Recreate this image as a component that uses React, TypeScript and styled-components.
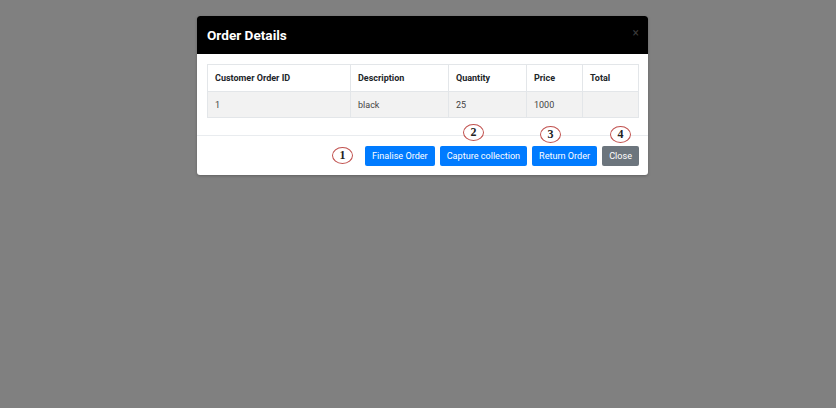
import React from "react";
import styled, { createGlobalStyle } from "styled-components";

const Global = createGlobalStyle`
  html, body { margin: 0; padding: 0; }
  body { background: #808080; font-family: Roboto, "Liberation Sans", Arial, sans-serif; width: 836px; height: 408px; overflow: hidden; }
`;

const Page = styled.div`
  width: 836px;
  height: 408px;
  display: flex;
  justify-content: flex-start;
  align-items: flex-start;
  padding: 16px 0 0 197px;
  box-sizing: border-box;
`;

const Modal = styled.div`
  position: relative;
  width: 451px;
  background: #fff;
  border-radius: 3px;
  box-shadow: 0 1px 3px rgba(0,0,0,0.25);
`;

const Header = styled.div`
  height: 38px;
  background: #000;
  border-radius: 3px 3px 0 0;
  display: flex;
  align-items: center;
  justify-content: space-between;
  padding: 0 9px 0 10px;
`;

const Title = styled.h5`
  margin: 0;
  color: #fff;
  font-size: 13.6px;
  font-weight: 700;
`;

const CloseX = styled.span`
  color: #3a3a3a;
  font-size: 12px;
  line-height: 1;
  margin-top: -4px;
`;

const Body = styled.div`
  padding: 10px 9px 17px 10px;
  border-bottom: 1px solid #e9ecef;
`;

const Table = styled.table`
  width: 100%;
  border-collapse: collapse;
  font-size: 9px;
  color: #212529;
  th, td {
    border: 1px solid #e3e6e9;
    text-align: left;
    padding: 0 7px;
  }
  th { font-weight: 700; height: 26px; }
  td { height: 25px; color: #444; }
  tbody tr { background: #f2f2f2; }
`;

const Footer = styled.div`
  display: flex;
  justify-content: flex-end;
  gap: 5px;
  padding: 10px 9px 9px 10px;
`;

const Button = styled.button<{ $variant?: "primary" | "secondary" }>`
  height: 20px;
  border: none;
  border-radius: 2px;
  padding: 0 7px;
  font-family: Roboto, "Liberation Sans", Arial, sans-serif;
  font-size: 9.1px;
  color: #fff;
  background: ${(p) => (p.$variant === "secondary" ? "#6c757d" : "#007bff")};
`;

const Badge = styled.span<{ $x: number; $y: number }>`
  position: absolute;
  left: ${(p) => p.$x}px;
  top: ${(p) => p.$y}px;
  width: 19px;
  height: 15px;
  border: 1.3px solid #c0504d;
  border-radius: 50%;
  display: flex;
  align-items: center;
  justify-content: center;
  font-family: "Liberation Serif", "Times New Roman", serif;
  font-weight: 700;
  font-size: 12px;
  color: #222;
  background: #fff;
`;

export default function App() {
  return (
    <>
      <Global />
      <Page>
        <Modal>
          <Header>
            <Title>Order Details</Title>
            <CloseX>×</CloseX>
          </Header>
          <Body>
            <Table>
              <thead>
                <tr>
                  <th style={{ width: 128 }}>Customer Order ID</th>
                  <th style={{ width: 83 }}>Description</th>
                  <th style={{ width: 63 }}>Quantity</th>
                  <th style={{ width: 41 }}>Price</th>
                  <th>Total</th>
                </tr>
              </thead>
              <tbody>
                <tr>
                  <td>1</td>
                  <td>black</td>
                  <td>25</td>
                  <td>1000</td>
                  <td></td>
                </tr>
              </tbody>
            </Table>
          </Body>
          <Footer>
            <Button>Finalise Order</Button>
            <Button>Capture collection</Button>
            <Button>Return Order</Button>
            <Button $variant="secondary">Close</Button>
          </Footer>
          <Badge $x={135} $y={131}>1</Badge>
          <Badge $x={266} $y={108}>2</Badge>
          <Badge $x={343} $y={110}>3</Badge>
          <Badge $x={413} $y={110}>4</Badge>
        </Modal>
      </Page>
    </>
  );
}
